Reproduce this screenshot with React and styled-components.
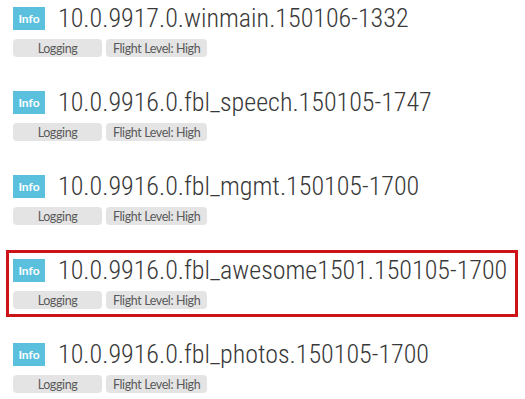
import React from "react";
import styled, { createGlobalStyle } from "styled-components";

const GlobalStyle = createGlobalStyle`
  body {
    margin: 0;
    background: #fff;
    font-family: Lato, "Open Sans", sans-serif;
  }
`;

const List = styled.div`
  display: flex;
  flex-direction: column;
  gap: 17px;
  margin: -2px 7px 0 6px;
`;

const Item = styled.div`
  border: 3px solid ${(p) => (p.selected ? "#cc1418" : "transparent")};
  padding: 5px 4px;
  display: flex;
  flex-direction: column;
  gap: 9px;
`;

const Head = styled.div`
  display: flex;
  align-items: center;
  gap: 13px;
  height: 24px;
`;

const Badge = styled.span`
  flex-shrink: 0;
  display: flex;
  align-items: center;
  justify-content: center;
  width: 32px;
  height: 23px;
  background: #5bc0de;
  color: #fff;
  font-size: 12px;
  font-weight: 700;
`;

const Title = styled.span`
  font-family: Roboto, "Liberation Sans", sans-serif;
  font-size: 26px;
  font-weight: 300;
  font-stretch: semi-condensed;
  color: #383838;
  line-height: 24px;
  white-space: nowrap;
`;

const Tags = styled.div`
  display: flex;
  gap: 4px;
`;

const Tag = styled.span`
  display: flex;
  align-items: center;
  justify-content: center;
  height: 18px;
  min-width: ${(p) => p.min || 0}px;
  padding: 0 7px;
  box-sizing: border-box;
  background: #e4e4e4;
  border-radius: 4px;
  color: #5a5a5a;
  font-size: 12.5px;
  letter-spacing: -0.4px;
`;

const builds = [
  "10.0.9917.0.winmain.150106-1332",
  "10.0.9916.0.fbl_speech.150105-1747",
  "10.0.9916.0.fbl_mgmt.150105-1700",
  "10.0.9916.0.fbl_awesome1501.150105-1700",
  "10.0.9916.0.fbl_photos.150105-1700",
];

export default function App() {
  return (
    <>
      <GlobalStyle />
      <List>
        {builds.map((b, i) => (
          <Item key={b} selected={i === 3}>
            <Head>
              <Badge>Info</Badge>
              <Title>{b}</Title>
            </Head>
            <Tags>
              <Tag min={89}>Logging</Tag>
              <Tag>Flight Level: High</Tag>
            </Tags>
          </Item>
        ))}
      </List>
    </>
  );
}
